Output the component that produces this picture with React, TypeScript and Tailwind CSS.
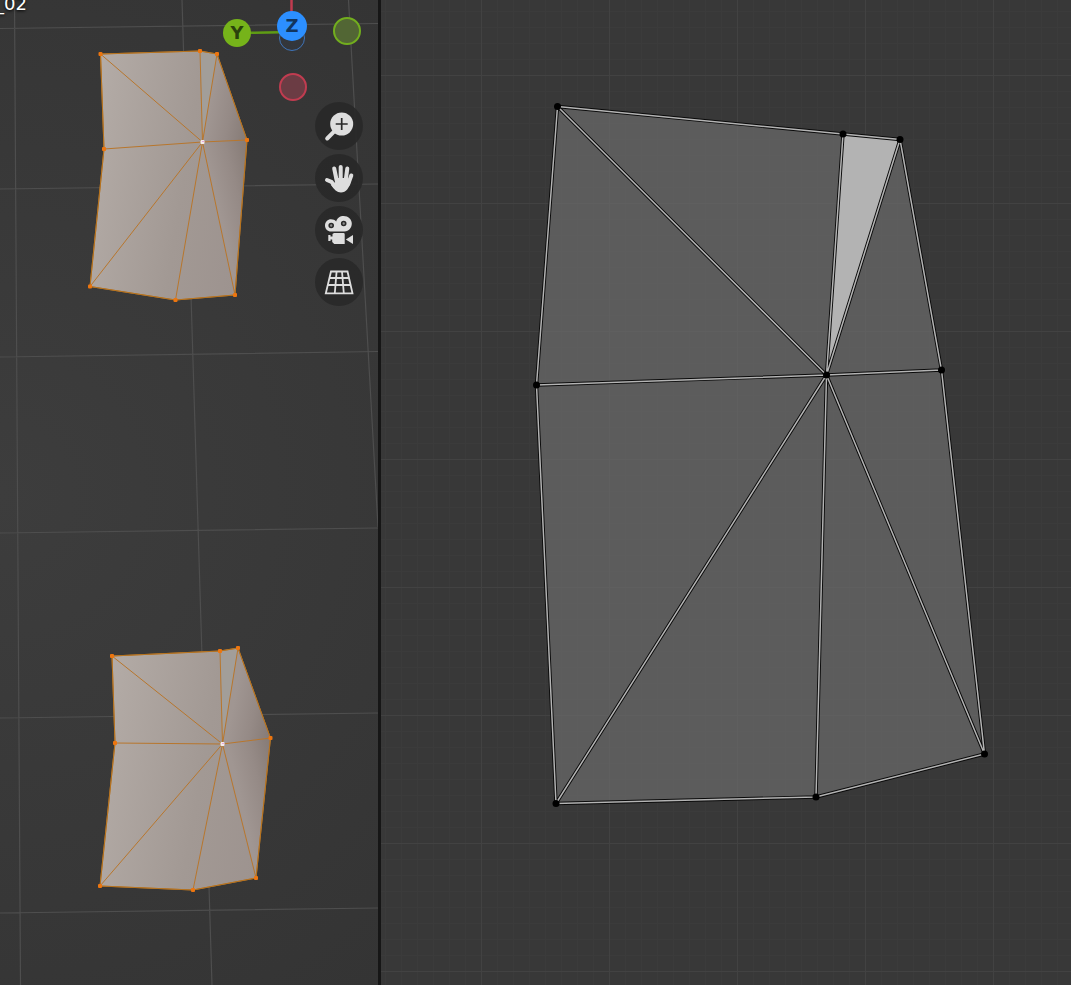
import type { ReactNode } from 'react'

type Point = [number, number]

interface Mesh {
  id: string
  // outline, clockwise from the top left corner
  ring: Point[]
  hub: Point
}

const MESHES: Mesh[] = [
  {
    id: 'upper',
    ring: [[100.5, 54], [200, 51], [217, 54], [247, 140], [235, 295], [175.5, 300], [90, 286.5], [104, 149]],
    hub: [202.5, 142],
  },
  {
    id: 'lower',
    ring: [[112, 656], [220, 651], [238, 648], [270.5, 738], [256, 878], [193, 890], [100, 886], [115, 743]],
    hub: [222.5, 744],
  },
]

const UV_RING: Point[] = [
  [176.5, 106.5], [462, 134], [519, 139.5], [560.5, 370], [603.5, 754], [435, 797], [175, 803.5], [155.5, 385],
]
const UV_HUB: Point = [445.5, 375]

const FLOOR_LINES = [
  'M0 28.5L378 23.5', 'M0 189L378 184', 'M0 357L378 351.5', 'M0 533L378 528', 'M0 718L378 713', 'M0 913L378 908',
  'M14.5 0L20.5 985', 'M182 0L212 985', 'M348.5 0L378 527',
]

const toPoints = (pts: Point[]) => pts.map((p) => p.join(',')).join(' ')
const edgePath = (ring: Point[], hub: Point) =>
  `M${ring.map((p) => p.join(' ')).join('L')}Z` + ring.map((p) => `M${hub.join(' ')}L${p.join(' ')}`).join('')

function MeshObject({ mesh }: { mesh: Mesh }) {
  const { id, ring, hub } = mesh
  const [, b, c, d, e] = ring
  return (
    <g>
      <defs>
        <linearGradient id={`${id}-base`} x1="0" y1="0.35" x2="1" y2="0.6">
          <stop offset="0" stopColor="#b3aba6" />
          <stop offset="0.6" stopColor="#a29994" />
          <stop offset="1" stopColor="#9d938f" />
        </linearGradient>
        <linearGradient id={`${id}-side`} gradientUnits="userSpaceOnUse" x1={d[0]} y1={d[1]} x2={d[0] - 42} y2={d[1] - 8}>
          <stop offset="0" stopColor="#857a75" />
          <stop offset="0.5" stopColor="#958a86" />
          <stop offset="1" stopColor="#a09692" />
        </linearGradient>
        <linearGradient id={`${id}-low`} gradientUnits="userSpaceOnUse" x1={d[0]} y1={d[1]} x2={d[0] - 42} y2={d[1] + 10}>
          <stop offset="0" stopColor="#857a75" />
          <stop offset="0.5" stopColor="#958a86" />
          <stop offset="1" stopColor="#a09692" />
        </linearGradient>
      </defs>
      <polygon points={toPoints(ring)} fill={`url(#${id}-base)`} />
      <polygon points={toPoints([b, c, hub])} fill="#a29e99" />
      <polygon points={toPoints([c, d, hub])} fill={`url(#${id}-side)`} />
      <polygon points={toPoints([d, e, hub])} fill={`url(#${id}-low)`} />
      <path d={edgePath(ring, hub)} fill="none" stroke="#b8762c" />
      <polygon points={toPoints(ring)} fill="none" stroke="#b5731f" />
      {ring.map(([x, y]) => (
        <rect key={`${x}-${y}`} x={x - 2} y={y - 2} width="4" height="4" rx="1" fill="#ec750f" />
      ))}
      <rect x={hub[0] - 2} y={hub[1] - 2} width="4" height="4" rx="1" fill="#f4ecec" />
      <rect x={hub[0]} y={hub[1] - 1} width="1" height="1" fill="#d65fd0" />
    </g>
  )
}

function NavButton({ label, children }: { label: string; children: ReactNode }) {
  return (
    <button type="button" aria-label={label} className="size-12 rounded-full bg-[#292929]/95">
      <svg viewBox="0 0 48 48" className="size-12" fill="#dedede" stroke="none">
        {children}
      </svg>
    </button>
  )
}

function NavButtons() {
  return (
    <div className="absolute right-[15px] top-[102px] flex flex-col gap-1">
      <NavButton label="Zoom">
        <circle cx="26.7" cy="22" r="11.5" />
        <path d="M20 28.7L12.2 36.5" stroke="#dedede" strokeWidth="4" strokeLinecap="round" />
        <path d="M26.7 16V28M20.7 22H32.7" stroke="#292929" strokeWidth="1.7" />
      </NavButton>
      <NavButton label="Move">
        <g fill="none" stroke="#dedede" strokeWidth="4" strokeLinecap="round">
          <path d="M19.2 14.5L21.8 27" />
          <path d="M25.7 13V27" />
          <path d="M32.3 14.5L30.6 27" />
          <path d="M36.3 21.5L33.2 30" />
          <path d="M12 26L16.5 28L20.5 33" />
        </g>
        <path d="M19.8 24L32.6 24L35.4 28.5C34.5 33.5 31 38.5 26 38.5C22 38.5 19 35.5 16 31L20.5 28Z" />
      </NavButton>
      <NavButton label="Camera view">
        <path d="M16 13.3C18.2 13.3 20 14.2 21.2 15.5C22 12 25 10 28.6 10C33.2 10 36.8 13.4 36.8 17.6C36.8 21.5 34 25.6 29.5 25.6H16C12.6 25.6 10 22.8 10 19.5C10 16 12.8 13.3 16 13.3Z" />
        <path d="M19 27H28.5Q29.7 27 29.7 28.2V38H19.2L17.2 36V33.5H15.5V35H13.3V29H15.5V30.5H17.5V28Z" />
        <path d="M30.8 33.5L38 29V38Z" />
        <g fill="#8c8c8c" stroke="#292929" strokeWidth="1.6">
          <circle cx="16.2" cy="19.5" r="2" />
          <circle cx="28.7" cy="17.5" r="2" />
        </g>
      </NavButton>
      <NavButton label="Toggle perspective">
        <g fill="none" stroke="#dedede" strokeWidth="1.8">
          <path d="M16 13.5H32.5L37.5 35.3H10.8Z" />
          <path d="M14.5 20H34M12.8 27H35.8M21.6 13.5L19.8 35.3M27 13.5L28.8 35.3" />
        </g>
      </NavButton>
    </div>
  )
}

function AxisGizmo() {
  return (
    <div className="absolute right-[17px] top-0 h-[101px] w-[138px] font-['DejaVu_Sans',sans-serif] text-lg font-bold leading-none">
      <svg viewBox="0 0 138 101" className="absolute inset-0 size-full" fill="none" strokeWidth="2.5">
        <path d="M68.5 0V14" stroke="#c23b4f" />
        <path d="M26 32.8L58 32.3" stroke="#5f9c14" />
      </svg>
      <button type="button" aria-label="-Z" className="absolute left-14 top-[25px] size-[26px] rounded-full border border-[#3f74b8] bg-[#313a46]/40" />
      <button type="button" className="absolute left-0 top-[19px] flex size-7 items-center justify-center rounded-full bg-[#76b31a] text-[#2a420c]">
        Y
      </button>
      <button type="button" className="absolute left-[54px] top-[11px] flex size-[30px] items-center justify-center rounded-full bg-[#2c8fff] text-[#12355e]">
        Z
      </button>
      <button type="button" aria-label="-Y" className="absolute left-[110px] top-[17px] size-7 rounded-full border-2 border-[#72ae1e] bg-[#526634]" />
      <button type="button" aria-label="-X" className="absolute left-14 top-[73px] size-7 rounded-full border-2 border-[#c03c50] bg-[#6b3c44]" />
    </div>
  )
}

function Viewport() {
  return (
    <section
      aria-label="3D viewport"
      className="relative min-w-0 flex-[378] overflow-hidden bg-[radial-gradient(circle_at_0%_50%,#3d3d3d,#343434_620px)]"
    >
      <svg viewBox="0 0 378 985" preserveAspectRatio="xMinYMin slice" className="absolute inset-0 size-full">
        <path d={FLOOR_LINES.join('')} stroke="#4e4e4e" strokeWidth="1.2" fill="none" />
        {MESHES.map((mesh) => (
          <MeshObject key={mesh.id} mesh={mesh} />
        ))}
      </svg>
      <div className="absolute -left-[5px] -top-[5px] font-['DejaVu_Sans',sans-serif] text-lg leading-none text-white [text-shadow:0_1px_3px_#000]">
        _02
      </div>
      <AxisGizmo />
      <NavButtons />
    </section>
  )
}

function UvEditor() {
  const edges = edgePath(UV_RING, UV_HUB)
  return (
    <section aria-label="UV editor" className="relative min-w-0 flex-[690] overflow-hidden bg-[#383838]">
      <svg viewBox="0 0 690 985" preserveAspectRatio="xMinYMin slice" className="absolute inset-0 size-full">
        <defs>
          <pattern id="minor" x="4" y="11" width="16" height="16" patternUnits="userSpaceOnUse">
            <path d="M0.5 0V16M0 0.5H16" stroke="#3b3b3b" />
          </pattern>
          <pattern id="major" x="100" y="75" width="128" height="128" patternUnits="userSpaceOnUse">
            <path d="M0.5 0V128M0 0.5H128" stroke="#424242" />
          </pattern>
        </defs>
        <rect width="690" height="985" fill="url(#minor)" />
        <rect width="690" height="985" fill="url(#major)" />
        <polygon points={toPoints(UV_RING)} fill="#717171" fillOpacity="0.64" />
        <polygon points={toPoints([UV_RING[1], UV_RING[2], UV_HUB])} fill="#b3b3b3" />
        <path d={edges} fill="none" stroke="#0a0a0a" strokeWidth="3.4" strokeLinejoin="round" />
        <path d={edges} fill="none" stroke="#b4b4b4" strokeWidth="1.5" />
        {[...UV_RING, UV_HUB].map(([x, y]) => (
          <circle key={`${x}-${y}`} cx={x} cy={y} r="3.5" fill="#000" />
        ))}
      </svg>
    </section>
  )
}

export default function App() {
  return (
    <main className="flex h-screen bg-[#383838]">
      <Viewport />
      <div className="w-[3px] shrink-0 bg-[#161616]" />
      <UvEditor />
    </main>
  )
}
